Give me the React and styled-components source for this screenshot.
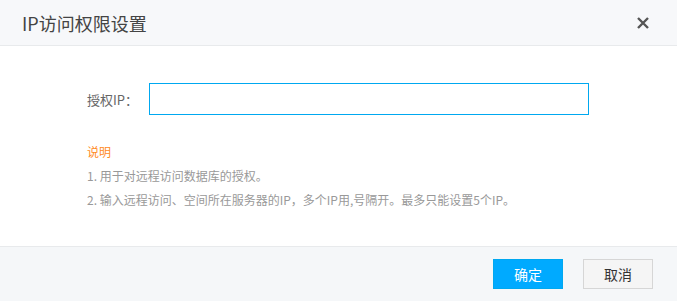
import React from 'react';
import styled, { createGlobalStyle } from 'styled-components';

const GlobalStyle = createGlobalStyle`
    html, body {
        margin: 0;
        padding: 0;
        background: #fff;
    }
    body {
        font-family: "Microsoft YaHei", "Noto Sans CJK SC", "Noto Sans", sans-serif;
    }
`;

const Dialog = styled.div`
    width: 677px;
    height: 301px;
    display: flex;
    flex-direction: column;
    background: #fff;
`;
const Header = styled.div`
    height: 46px;
    display: flex;
    align-items: center;
    justify-content: space-between;
    padding: 0 24px 0 22px;
    background: #f7f8fa;
    border-bottom: 1px solid #e8eaec;
    box-sizing: border-box;
`;
const Title = styled.h2`
    margin: 0;
    font-size: 18px;
    font-weight: normal;
    color: #444;
`;
const Close = styled.button`
    width: 16px;
    height: 16px;
    padding: 0;
    border: none;
    background: transparent;
    cursor: pointer;
    display: flex;
    align-items: center;
    justify-content: center;
    margin-right: 2px;
`;
const Body = styled.div`
    flex-grow: 1;
    padding: 37px 0 0 87px;
    border-bottom: 1px solid #e8eaec;
`;
const Row = styled.div`
    display: flex;
    align-items: center;
`;
const Label = styled.label`
    width: 62px;
    font-size: 13px;
    color: #666;
`;
const Input = styled.input`
    width: 440px;
    height: 32px;
    box-sizing: border-box;
    border: 1px solid #00a8f0;
    outline: none;
    padding: 0 8px;
    font-size: 13px;
`;
const Notes = styled.div`
    margin-top: 25px;
    font-size: 12px;
    line-height: 24px;
    color: #999;
`;
const NoteTitle = styled.div`
    color: #ff8a1e;
`;
const Footer = styled.div`
    height: 54px;
    flex-shrink: 0;
    display: flex;
    align-items: center;
    justify-content: flex-end;
    gap: 20px;
    padding-right: 24px;
    background: #f5f7f9;
`;
const Button = styled.button`
    width: 70px;
    height: 30px;
    box-sizing: border-box;
    font-family: inherit;
    font-size: 14px;
    cursor: pointer;
    border: 1px solid ${p => (p.primary ? '#00a8f0' : '#d6d6d6')};
    background: ${p => (p.primary ? '#00aaff' : '#f5f5f5')};
    color: ${p => (p.primary ? '#fff' : '#333')};
`;

export default function App() {
    return (
        <>
            <GlobalStyle />
            <Dialog>
                <Header>
                    <Title>IP访问权限设置</Title>
                    <Close>
                        <svg width="12" height="12" viewBox="0 0 12 12">
                            <path d="M1 1L11 11M11 1L1 11" stroke="#555" strokeWidth="2.4" />
                        </svg>
                    </Close>
                </Header>
                <Body>
                    <Row>
                        <Label>授权IP：</Label>
                        <Input />
                    </Row>
                    <Notes>
                        <NoteTitle>说明</NoteTitle>
                        <div>1. 用于对远程访问数据库的授权。</div>
                        <div>2. 输入远程访问、空间所在服务器的IP，多个IP用,号隔开。最多只能设置5个IP。</div>
                    </Notes>
                </Body>
                <Footer>
                    <Button primary>确定</Button>
                    <Button>取消</Button>
                </Footer>
            </Dialog>
        </>
    );
}
